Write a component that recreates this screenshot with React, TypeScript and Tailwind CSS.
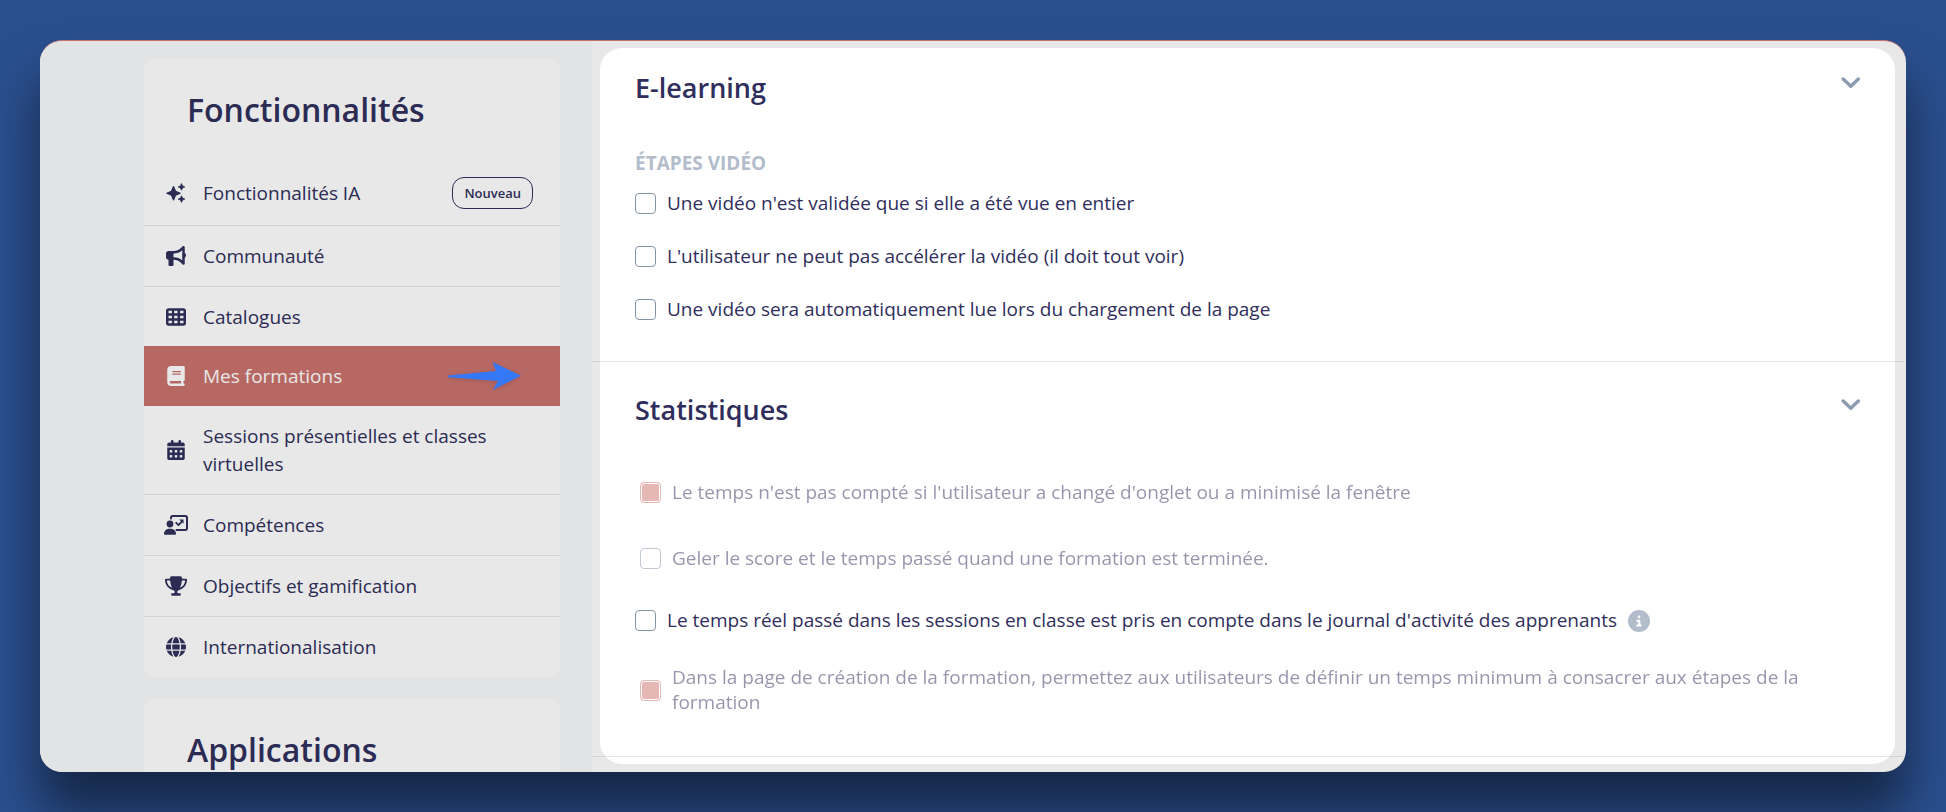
import { useState } from "react";
import type { ReactNode } from "react";
import {
  FaBook,
  FaBullhorn,
  FaCalendarDays,
  FaCircleInfo,
  FaGlobe,
  FaTableCells,
  FaTrophy,
} from "react-icons/fa6";

function SparklesIcon() {
  return (
    <svg viewBox="0 0 20 20" className="size-5" fill="currentColor" aria-hidden="true">
      <path d="M7.5 3.5 9.500 8.200 14.200 10.200 9.500 12.200 7.500 16.900 5.500 12.200.800 10.200 5.500 8.200z" stroke="currentColor" strokeWidth="1.200" strokeLinejoin="round" />
      <path d="M15.500.600l1 2.300 2.300 1-2.300 1-1 2.300-1-2.300-2.300-1 2.300-1zM15.500 12.800l1 2.300 2.300 1-2.300 1-1 2.300-1-2.300-2.300-1 2.300-1z" stroke="currentColor" strokeWidth="0.800" strokeLinejoin="round" />
    </svg>
  );
}

function BoardUserIcon() {
  return (
    <svg viewBox="0 0 24 20" className="h-5 w-6 shrink-0" aria-hidden="true">
      <path d="M7 3.500V2.700C7 1.800 7.700 1 8.700 1h12.600c1 0 1.700.800 1.700 1.700v10.600c0 1-.800 1.700-1.700 1.700h-8.800" fill="none" stroke="currentColor" strokeWidth="2" strokeLinecap="round" />
      <path d="M12.200 7.800l2.300 2.300 3.800-3.900" fill="none" stroke="currentColor" strokeWidth="1.800" strokeLinecap="round" strokeLinejoin="round" />
      <path d="M15.200 4.500h4.300v4.300z" fill="currentColor" />
      <circle cx="6" cy="9" r="3.400" fill="currentColor" />
      <path d="M0 19c0-3 2.400-5.200 5.200-5.200h1.600c2.800 0 5.200 2.200 5.200 5.200 0 .400-.400.800-.800.800H.800c-.400 0-.8-.400-.8-.8z" fill="currentColor" />
    </svg>
  );
}

function ChevronIcon() {
  return (
    <svg viewBox="0 0 20 12" className="h-3 w-5" fill="none" aria-hidden="true">
      <path d="M3.200 2 10.800 9.200l7.500-7.200" stroke="currentColor" strokeWidth="3.400" strokeLinecap="round" strokeLinejoin="round" />
    </svg>
  );
}

function ArrowMark() {
  return (
    <svg viewBox="0 0 73 28" className="h-7 w-[73px] drop-shadow-sm" fill="#3478f6" aria-hidden="true">
      <path d="M0 13.500V15.200L50 19 44.700 28 73 13.700 44.500 0 48 9z" />
    </svg>
  );
}

type NavItem = { label: string; icon: ReactNode; badge?: string; active?: boolean };

const features: NavItem[] = [
  { label: "Fonctionnalités IA", icon: <SparklesIcon />, badge: "Nouveau" },
  { label: "Communauté", icon: <FaBullhorn size={20} /> },
  { label: "Catalogues", icon: <FaTableCells size={20} /> },
  { label: "Mes formations", icon: <FaBook size={20} />, active: true },
  { label: "Sessions présentielles et classes virtuelles", icon: <FaCalendarDays size={20} /> },
  { label: "Compétences", icon: <BoardUserIcon /> },
  { label: "Objectifs et gamification", icon: <FaTrophy className="h-5 w-[22px]" /> },
  { label: "Internationalisation", icon: <FaGlobe size={20} /> },
];

function NavRow({ item, divided }: { item: NavItem; divided: boolean }) {
  return (
    <li className={divided ? "border-b border-[#cdd5da]" : item.active ? "-mt-px" : ""}>
      <a
        href="#"
        aria-current={item.active ? "page" : undefined}
        className={`flex items-center py-4 pr-[27px] pl-5 text-[19px]/7 ${item.active ? "bg-[#b86863] text-[#e8e8e8]" : ""}`}
      >
        <span className="mr-[15px] flex w-6 shrink-0 justify-center">{item.icon}</span>
        <span className="flex-1">{item.label}</span>
        {item.badge && (
          <span className="flex h-8 items-center rounded-xl border border-[#2b2b54] px-[11px] text-[13px] font-semibold">
            {item.badge}
          </span>
        )}
        {item.active && (
          <span className="mr-3">
            <ArrowMark />
          </span>
        )}
      </a>
    </li>
  );
}

function SideCard({ title, children }: { title: string; children?: ReactNode }) {
  return (
    <section className="shrink-0 overflow-hidden rounded-[10px] bg-[#e8e8e8]">
      <h2 className="px-[43px] py-[29px] text-[32px]/[44px] font-semibold">{title}</h2>
      {children}
    </section>
  );
}

type OptionProps = { id: string; label: string; checked?: boolean; disabled?: boolean; info?: boolean };

function Option({ id, label, checked = false, disabled = false, info = false }: OptionProps) {
  const [on, setOn] = useState(checked);
  return (
    <div className={`flex items-center ${disabled ? "pl-[5px] opacity-50" : ""}`}>
      <input
        id={id}
        type="checkbox"
        checked={on}
        disabled={disabled}
        onChange={(e) => setOn(e.target.checked)}
        className="size-[21px] shrink-0 appearance-none rounded-[4px] border border-[#8494a8] bg-white checked:border-[#cd736f] checked:bg-[#cd736f] checked:shadow-[inset_0_0_0_1px_#ffffff]"
      />
      <label htmlFor={id} className="pl-[11px] text-[19px]/[25px]">
        {label}
      </label>
      {info && (
        <button type="button" aria-label="Plus d'informations" className="ml-[11px] text-[#b3bccb]">
          <FaCircleInfo size={22} />
        </button>
      )}
    </div>
  );
}

function SectionHeader({ title }: { title: string }) {
  return (
    <div className="flex items-start justify-between">
      <h2 className="text-[27px]/9 font-semibold">{title}</h2>
      <button type="button" aria-label={`Replier ${title}`} className="pt-[7px] text-[#8c9bb0]">
        <ChevronIcon />
      </button>
    </div>
  );
}

export default function App() {
  return (
    <div className="h-screen overflow-hidden bg-[#2a4f8e] p-10 font-['Open_Sans','Noto_Sans',sans-serif] text-[#2b2b54]">
      <div className="flex h-full overflow-hidden rounded-[22px] border-t border-[#c9706e] bg-[#e8e8e8] shadow-[0_40px_50px_rgba(0,0,0,0.5)]">
        <aside className="flex w-[552px] shrink-0 flex-col gap-[22px] bg-[#e1e3e5] pt-[18px] pr-8 pl-[104px]">
          <SideCard title="Fonctionnalités">
            <ul>
              {features.map((item, i) => (
                <NavRow
                  key={item.label}
                  item={item}
                  divided={!item.active && !features[i + 1]?.active && i < features.length - 1}
                />
              ))}
            </ul>
          </SideCard>
          <SideCard title="Applications" />
        </aside>

        <main className="flex min-w-0 flex-1 flex-col pt-[7px] pr-[11px] pb-2 pl-2 text-[#302e5c]">
          <div className="flex-1 rounded-[22px] bg-white">
            <section className="px-[35px] pt-[22px] pb-[39px]">
              <SectionHeader title="E-learning" />
              <h3 className="mt-[43px] text-[19px]/7 font-bold text-[#b3bccb]">ÉTAPES VIDÉO</h3>
              <div className="mt-3.5 flex flex-col gap-7">
                <Option id="video-full" label="Une vidéo n'est validée que si elle a été vue en entier" />
                <Option id="video-speed" label="L'utilisateur ne peut pas accélérer la vidéo (il doit tout voir)" />
                <Option id="video-auto" label="Une vidéo sera automatiquement lue lors du chargement de la page" />
              </div>
            </section>
            <hr className="-mr-[9px] -ml-2 border-[#2b4b54]/12" />
            <section className="px-[35px] pt-[30px] pb-[41px]">
              <SectionHeader title="Statistiques" />
              <div className="mt-[52px] flex flex-col gap-[41px] pr-12">
                <Option id="stat-tab" label="Le temps n'est pas compté si l'utilisateur a changé d'onglet ou a minimisé la fenêtre" checked disabled />
                <Option id="stat-freeze" label="Geler le score et le temps passé quand une formation est terminée." disabled />
              </div>
              <div className="mt-[37px] flex flex-col gap-8 pr-12">
                <Option
                  id="stat-real"
                  label="Le temps réel passé dans les sessions en classe est pris en compte dans le journal d'activité des apprenants"
                  info
                />
                <Option
                  id="stat-min"
                  label="Dans la page de création de la formation, permettez aux utilisateurs de définir un temps minimum à consacrer aux étapes de la formation"
                  checked
                  disabled
                />
              </div>
            </section>
            <hr className="-mr-[9px] -ml-2 border-[#2b4b54]/12" />
          </div>
        </main>
      </div>
    </div>
  );
}
